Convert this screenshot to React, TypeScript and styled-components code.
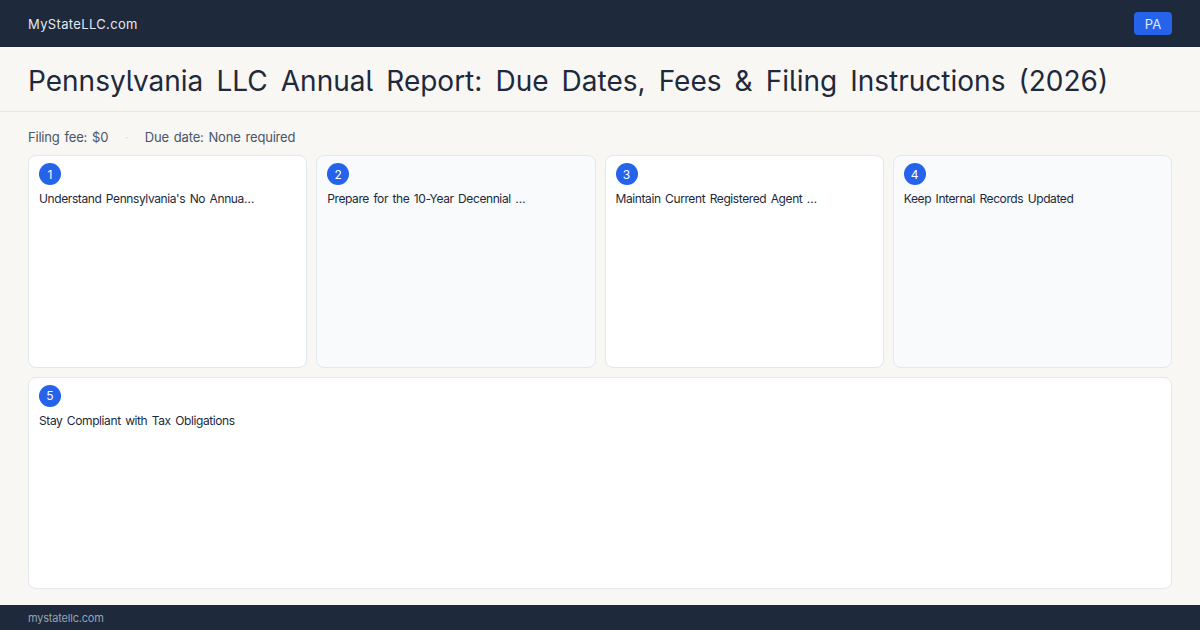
import * as React from 'react';
import styled, { createGlobalStyle } from 'styled-components';

const GlobalStyle = createGlobalStyle`
  html, body {
    margin: 0;
    padding: 0;
  }
  body {
    font-family: Inter, "Noto Sans", sans-serif;
    background: #f8f7f4;
  }
`;

const Page = styled.div`
  width: 1200px;
  height: 630px;
  display: flex;
  flex-direction: column;
  background: #f8f7f4;
  overflow: hidden;
`;

const TopBar = styled.header`
  height: 47px;
  flex-shrink: 0;
  background: #1e293b;
  display: flex;
  align-items: center;
  justify-content: space-between;
  padding: 0 28px;
`;

const Brand = styled.div`
  color: #e2e8f0;
  font-size: 13px;
  letter-spacing: 0.35px;
`;

const StateTag = styled.div`
  background: #2563eb;
  color: #e0e7ff;
  font-size: 13px;
  border-radius: 4px;
  height: 23px;
  width: 38px;
  display: flex;
  align-items: center;
  justify-content: center;
`;

const TitleBar = styled.div`
  height: 64px;
  flex-shrink: 0;
  display: flex;
  align-items: center;
  padding: 0 28px;
  border-bottom: 1px solid #e2e8f0;
`;

const Title = styled.h1`
  margin: 0;
  font-size: 28px;
  font-weight: 400;
  color: #1e293b;
  word-spacing: 5.2px;
  white-space: nowrap;
  font-feature-settings: 'cv05';
  padding-top: 3px;
`;

const Main = styled.main`
  flex: 1;
  display: flex;
  flex-direction: column;
  padding: 17px 28px 16px;
  min-height: 0;
`;

const Meta = styled.div`
  display: flex;
  align-items: center;
  gap: 17px;
  font-size: 13px;
  color: #475569;
  height: 16px;
  margin-bottom: 10px;
  letter-spacing: -0.2px;
  word-spacing: 1.5px;
`;

const Dot = styled.span`
  color: #cbd5e1;
  font-size: 10px;
`;

const Grid = styled.div`
  flex: 1;
  display: grid;
  grid-template-columns: repeat(4, 1fr);
  grid-template-rows: 1fr 1fr;
  gap: 9px;
`;

const Card = styled.div<{ $tinted?: boolean; $wide?: boolean }>`
  background: ${(p) => (p.$tinted ? '#f8fafc' : '#ffffff')};
  border: 1px solid #e2e8f0;
  border-radius: 8px;
  padding: 7px 10px;
  grid-column: ${(p) => (p.$wide ? '1 / -1' : 'auto')};
  display: flex;
  flex-direction: column;
  gap: 6px;
`;

const Badge = styled.div`
  width: 22px;
  height: 22px;
  border-radius: 50%;
  background: #2563eb;
  color: #ffffff;
  font-size: 12px;
  display: flex;
  align-items: center;
  justify-content: center;
`;

const StepTitle = styled.div`
  font-size: 12px;
  color: #1e293b;
  letter-spacing: -0.4px;
  word-spacing: 1.5px;
  white-space: nowrap;
`;

const Footer = styled.footer`
  height: 25px;
  flex-shrink: 0;
  background: #1e293b;
  display: flex;
  align-items: center;
  padding: 0 28px;
  color: #94a3b8;
  font-size: 11px;
  letter-spacing: -0.2px;
`;

const steps = [
  "Understand Pennsylvania's No Annua…",
  'Prepare for the 10-Year Decennial …',
  'Maintain Current Registered Agent …',
  'Keep Internal Records Updated',
  'Stay Compliant with Tax Obligations',
];

export default function App() {
  return (
    <>
      <GlobalStyle />
      <Page>
        <TopBar>
          <Brand>MyStateLLC.com</Brand>
          <StateTag>PA</StateTag>
        </TopBar>
        <TitleBar>
          <Title>Pennsylvania LLC Annual Report: Due Dates, Fees &amp; Filing Instructions (2026)</Title>
        </TitleBar>
        <Main>
          <Meta>
            <span>Filing fee: $0</span>
            <Dot>·</Dot>
            <span>Due date: None required</span>
          </Meta>
          <Grid>
            {steps.map((s, i) => (
              <Card key={i} $tinted={i % 2 === 1} $wide={i === 4}>
                <Badge>{i + 1}</Badge>
                <StepTitle>{s}</StepTitle>
              </Card>
            ))}
          </Grid>
        </Main>
        <Footer>mystatellc.com</Footer>
      </Page>
    </>
  );
}
